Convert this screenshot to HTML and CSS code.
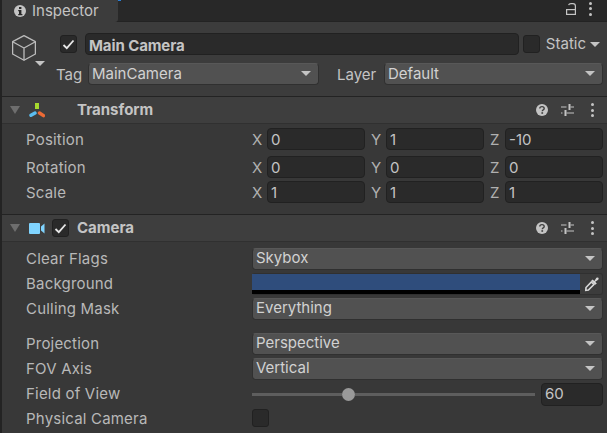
FILE: index.html
```html
<!DOCTYPE html>
<html>

<head>
	<title>Inspector</title>
	<link rel="stylesheet" href="styles.css">
</head>

<body>
	<div class="inspector">
		<div class="tabBar">
			<div class="tab">
				<svg class="tabIcon" width="12" height="12" viewBox="0 0 12 12">
					<circle cx="6" cy="6" r="6" fill="#c4c4c4" />
					<rect x="5" y="2" width="2.4" height="2" fill="#282828" />
					<path d="M4.2 5H7.4V9H8.4V10.2H4.2V9H5V6.2H4.2Z" fill="#282828" />
				</svg>
				<span>Inspector</span>
			</div>
			<div class="tabMark"></div>
			<div class="tabTools">
				<svg width="10" height="12" viewBox="0 0 10 12" fill="none" stroke="#c4c4c4" stroke-width="1.2">
					<rect x="0.6" y="6.6" width="8.8" height="4.8" />
					<path d="M2.6 2.2Q3 .6 5 .6H7Q9.4 .6 9.4 3V6.6" />
				</svg>
				<div class="dots"><i></i><i></i><i></i></div>
			</div>
		</div>

		<div class="goHeader">
			<div class="goIcon">
				<svg width="24" height="26" viewBox="0 0 24 26" fill="none" stroke="#bcbcbc" stroke-width="1.3" stroke-linejoin="round">
					<path d="M12 .7 23.4 6.7V19L12 25.3 .6 19V6.7Z" />
					<path d="M.6 6.7 12 13 23.4 6.7M12 13V25.3" />
				</svg>
				<div class="caret goCaret"></div>
			</div>
			<div class="goFields">
				<div class="goRow">
					<div class="check on"><svg width="13" height="11" viewBox="0 0 13 11"><path d="M1.5 6 4.8 9.2 11.5 1.5" fill="none" stroke="#e8e8e8" stroke-width="1.8" /></svg></div>
					<div class="field nameField">Main Camera</div>
					<div class="check"></div>
					<div class="staticLabel">Static</div>
					<div class="caret"></div>
				</div>
				<div class="goRow">
					<div class="goLabel tagLabel">Tag</div>
					<div class="dropdown tagDrop"><span>MainCamera</span><div class="caret"></div></div>
					<div class="goLabel layerLabel">Layer</div>
					<div class="dropdown layerDrop"><span>Default</span><div class="caret"></div></div>
				</div>
			</div>
		</div>

		<div class="compHeader">
			<div class="caret foldCaret"></div>
			<svg class="compIcon" width="16" height="15" viewBox="0 0 16 15">
				<rect x="6" y="0" width="4" height="6" fill="#a6d92e" />
				<path d="M2 12.3 6 10" fill="none" stroke="#5bbdf0" stroke-width="3.4" stroke-linecap="round" />
				<path d="M10.5 10 14.5 12.6" fill="none" stroke="#ec6a35" stroke-width="3.4" stroke-linecap="round" />
			</svg>
			<div class="compTitle transformTitle">Transform</div>
			<div class="compTools">
				<svg class="helpIcon" width="12" height="12" viewBox="0 0 12 12">
					<circle cx="6" cy="6" r="6" fill="#c4c4c4" />
					<path d="M3.8 4.6Q3.8 2.6 6 2.6Q8.2 2.6 8.2 4.4Q8.2 5.4 7 6Q6.3 6.4 6.3 7.3" fill="none" stroke="#3e3e3e" stroke-width="1.4" />
					<rect x="5.4" y="8.2" width="1.7" height="1.6" fill="#3e3e3e" />
				</svg>
				<svg class="presetIcon" width="13" height="12" viewBox="0 0 13 12" fill="#c4c4c4">
					<rect x="0" y="2.5" width="5.5" height="1" />
					<rect x="7.5" y="0" width="2" height="6" />
					<rect x="9.5" y="2.5" width="3.5" height="1" />
					<rect x="0" y="8.5" width="1.5" height="1" />
					<rect x="3.5" y="6" width="2" height="6" />
					<rect x="5.5" y="8.5" width="7.5" height="1" />
				</svg>
				<div class="dots"><i></i><i></i><i></i></div>
			</div>
		</div>

		<div class="compBody transformBody">
			<div class="row">
				<div class="rowLabel">Position</div>
				<div class="vector">
					<div class="axis"><span>X</span><div class="field numField">0</div></div>
					<div class="axis"><span>Y</span><div class="field numField">1</div></div>
					<div class="axis"><span>Z</span><div class="field numField">-10</div></div>
				</div>
			</div>
			<div class="row gapLarge">
				<div class="rowLabel">Rotation</div>
				<div class="vector">
					<div class="axis"><span>X</span><div class="field numField">0</div></div>
					<div class="axis"><span>Y</span><div class="field numField">0</div></div>
					<div class="axis"><span>Z</span><div class="field numField">0</div></div>
				</div>
			</div>
			<div class="row gapSmall">
				<div class="rowLabel">Scale</div>
				<div class="vector">
					<div class="axis"><span>X</span><div class="field numField">1</div></div>
					<div class="axis"><span>Y</span><div class="field numField">1</div></div>
					<div class="axis"><span>Z</span><div class="field numField">1</div></div>
				</div>
			</div>
		</div>

		<div class="compHeader">
			<div class="caret foldCaret"></div>
			<svg class="compIcon camIcon" width="16" height="11" viewBox="0 0 16 11" fill="#80d4ff">
				<rect x="0" y="0" width="11" height="11" rx="1" />
				<path d="M12 3.5 15.5 .5V10.5L12 7.5Z" />
			</svg>
			<div class="check on compCheck"><svg width="13" height="11" viewBox="0 0 13 11"><path d="M1.5 6 4.8 9.2 11.5 1.5" fill="none" stroke="#e8e8e8" stroke-width="1.8" /></svg></div>
			<div class="compTitle">Camera</div>
			<div class="compTools">
				<svg class="helpIcon" width="12" height="12" viewBox="0 0 12 12">
					<circle cx="6" cy="6" r="6" fill="#c4c4c4" />
					<path d="M3.8 4.6Q3.8 2.6 6 2.6Q8.2 2.6 8.2 4.4Q8.2 5.4 7 6Q6.3 6.4 6.3 7.3" fill="none" stroke="#3e3e3e" stroke-width="1.4" />
					<rect x="5.4" y="8.2" width="1.7" height="1.6" fill="#3e3e3e" />
				</svg>
				<svg class="presetIcon" width="13" height="12" viewBox="0 0 13 12" fill="#c4c4c4">
					<rect x="0" y="2.5" width="5.5" height="1" />
					<rect x="7.5" y="0" width="2" height="6" />
					<rect x="9.5" y="2.5" width="3.5" height="1" />
					<rect x="0" y="8.5" width="1.5" height="1" />
					<rect x="3.5" y="6" width="2" height="6" />
					<rect x="5.5" y="8.5" width="7.5" height="1" />
				</svg>
				<div class="dots"><i></i><i></i><i></i></div>
			</div>
		</div>

		<div class="compBody cameraBody">
			<div class="row">
				<div class="rowLabel">Clear Flags</div>
				<div class="dropdown grow"><span>Skybox</span><div class="caret"></div></div>
			</div>
			<div class="row gapMid">
				<div class="rowLabel">Background</div>
				<div class="colorField">
					<div class="colorSwatch"></div>
					<div class="picker">
						<svg width="15" height="15" viewBox="0 0 15 15">
							<path d="M8.6 2.4 10.4 4 12.4.8Q13.5 0 14.4.8 15 1.8 14.2 2.8L11.2 4.8 12.8 6.6 11.2 7.8 7.2 3.8Z" fill="#d8d8d8" />
							<path d="M7.4 5 9.9 7.5 4.4 13 1.8 13.4 2 10.5Z" fill="none" stroke="#d8d8d8" stroke-width="1.6" />
						</svg>
					</div>
				</div>
			</div>
			<div class="row gapMid">
				<div class="rowLabel">Culling Mask</div>
				<div class="dropdown grow"><span>Everything</span><div class="caret"></div></div>
			</div>
			<div class="row gapSection">
				<div class="rowLabel">Projection</div>
				<div class="dropdown grow"><span>Perspective</span><div class="caret"></div></div>
			</div>
			<div class="row gapMid">
				<div class="rowLabel">FOV Axis</div>
				<div class="dropdown grow"><span>Vertical</span><div class="caret"></div></div>
			</div>
			<div class="row gapMid">
				<div class="rowLabel">Field of View</div>
				<div class="slider">
					<div class="sliderTrack"><div class="sliderLeft"></div><div class="sliderThumb"></div><div class="sliderRight"></div></div>
					<div class="field sliderValue">60</div>
				</div>
			</div>
			<div class="row gapMid">
				<div class="rowLabel">Physical Camera</div>
				<div class="check lastCheck"></div>
			</div>
		</div>
	</div>
</body>

</html>
```

FILE: styles.css
```css
* {
	box-sizing: border-box;
	margin: 0;
	padding: 0;
}

html,
body {
	height: 100%;
	overflow: hidden;
}

body {
	background: #383838;
	color: #c4c4c4;
	font-family: "Inter", "Liberation Sans", sans-serif;
	font-size: 15px;
	line-height: 20px;
}

svg {
	display: block;
}

.inspector {
	height: 433px;
	border-left: 2px solid #232323;
}

.tabBar {
	display: flex;
	height: 22px;
	background: #282828;
	border-bottom: 1px solid #232323;
}

.tab {
	display: flex;
	align-items: center;
	width: 116px;
	height: 22px;
	padding-left: 12px;
	gap: 6px;
	background: #3c3c3c;
	border-radius: 0 0 3px 0;
}

.tabMark {
	width: 3px;
	height: 1px;
	background: #2a7fd8;
}

.tabTools {
	display: flex;
	align-items: center;
	margin-left: auto;
	padding: 0 15px 4px 0;
	gap: 13px;
}

.dots {
	display: flex;
	flex-direction: column;
	gap: 2.5px;
}

.dots i {
	display: block;
	width: 3px;
	height: 3px;
	border-radius: 50%;
	background: #c4c4c4;
}

.caret {
	flex-shrink: 0;
	width: 0;
	height: 0;
	border-left: 5px solid transparent;
	border-right: 5px solid transparent;
	border-top: 5px solid #c4c4c4;
}

.goHeader {
	display: flex;
	height: 75px;
	padding-top: 11px;
	background: #3c3c3c;
	border-bottom: 1px solid #232323;
}

.goIcon {
	width: 54px;
	padding: 2px 0 0 10px;
}

.goCaret {
	margin-left: 23px;
}

.goFields {
	flex: 1;
	display: flex;
	flex-direction: column;
	gap: 8px;
	padding-right: 4px;
}

.goRow {
	display: flex;
	align-items: center;
	height: 22px;
}

.goRow:first-child {
	padding: 0 3px 0 4px;
}

.check {
	flex-shrink: 0;
	display: flex;
	align-items: center;
	justify-content: center;
	width: 17px;
	height: 18px;
	background: #2a2a2a;
	border: 1px solid #212121;
	border-radius: 3px;
}

.field {
	height: 22px;
	padding: 0 3px;
	background: #2a2a2a;
	border: 1px solid #212121;
	border-radius: 4px;
	color: #c4c4c4;
	line-height: 21px;
}

.nameField {
	flex: 1;
	margin: 0 4px 0 8px;
	padding-top: 1px;
	font-weight: 700;
	letter-spacing: -0.1px;
}

.staticLabel {
	margin: 0 4px 0 6px;
}

.goLabel {
	flex-shrink: 0;
	padding-top: 2px;
}

.tagLabel {
	width: 32px;
}

.layerLabel {
	width: 47px;
	margin-left: 18px;
}

.dropdown {
	display: flex;
	align-items: center;
	justify-content: space-between;
	height: 22px;
	padding: 0 7px 1px 3px;
	background: #515151;
	border: 1px solid #303030;
	border-top-color: #585858;
	border-radius: 4px;
	color: #d2d2d2;
}

.cameraBody .dropdown {
	padding-bottom: 2px;
}

.tagDrop {
	width: 231px;
}

.layerDrop {
	flex: 1;
}

.compHeader {
	display: flex;
	align-items: center;
	height: 27px;
	background: #3e3e3e;
	border-bottom: 1px solid #303030;
}

.foldCaret {
	margin: 0 9px 0 8px;
	border-top-width: 8px;
	border-top-color: #6e6e6e;
}

.camIcon {
	margin-right: 7px;
}

.compCheck {
	margin-right: 8px;
}

.compTitle {
	font-weight: 700;
	color: #c4c4c4;
}

.transformTitle {
	margin-left: 32px;
}

.compTools {
	display: flex;
	align-items: center;
	margin-left: auto;
	padding-right: 13px;
}

.helpIcon {
	margin-right: 13px;
}

.presetIcon {
	margin-right: 17px;
}

.compBody {
	display: flex;
	flex-direction: column;
	padding: 4px 4px 0 24px;
	background: #383838;
}

.transformBody {
	height: 91px;
	border-bottom: 1px solid #232323;
}

.transformBody .rowLabel,
.axis span {
	padding-top: 2px;
}

.transformBody .numField {
	line-height: 22px;
}

.cameraBody {
	padding-top: 6px;
}

.row {
	display: flex;
	align-items: center;
	height: 22px;
}

.gapLarge {
	margin-top: 6px;
}

.gapSmall,
.gapMid {
	margin-top: 3px;
}

.gapSection {
	margin-top: 13px;
}

.rowLabel {
	flex-shrink: 0;
	width: 226px;
	color: #b8b8b8;
	letter-spacing: 0.2px;
}

.vector {
	flex: 1;
	display: grid;
	grid-template-columns: repeat(3, 1fr);
	gap: 6px;
}

.axis {
	display: flex;
	align-items: center;
}

.axis span {
	flex-shrink: 0;
	width: 15px;
	color: #b0b0b0;
}

.numField {
	flex: 1;
}

.grow {
	flex: 1;
}

.colorField {
	flex: 1;
	display: flex;
	height: 22px;
	background: #3c3c3c;
	border: 1px solid #303030;
	border-left: 0;
	border-radius: 3px;
}

.colorSwatch {
	width: 328px;
	height: 20px;
	background: #2f4d7c;
	border-bottom: 4px solid #000;
}

.picker {
	flex: 1;
	display: flex;
	align-items: center;
	justify-content: center;
}

.slider {
	flex: 1;
	display: flex;
	align-items: center;
	gap: 6px;
}

.sliderTrack {
	flex: 1;
	display: flex;
	align-items: center;
}

.sliderLeft {
	width: 90px;
	height: 3px;
	background: #5e5e5e;
}

.sliderRight {
	flex: 1;
	height: 3px;
	background: #5e5e5e;
}

.sliderThumb {
	width: 13px;
	height: 13px;
	border-radius: 50%;
	background: #999;
}

.sliderValue {
	width: 62px;
	height: 23px;
	line-height: 20px;
}

.lastCheck {
	margin-bottom: 2px;
}
```
